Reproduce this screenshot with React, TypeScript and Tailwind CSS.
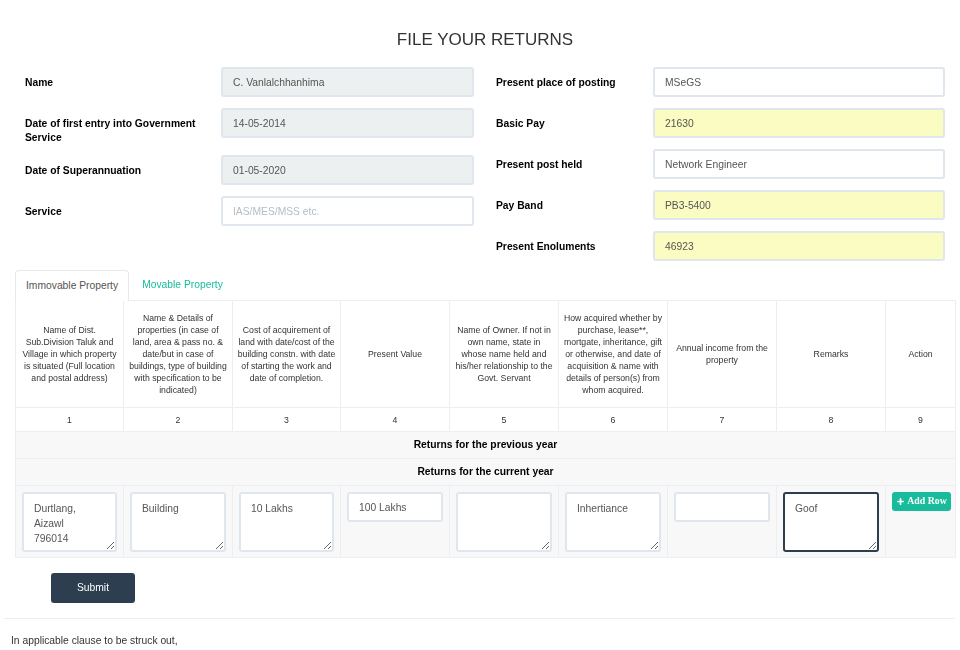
import { Plus } from "lucide-react"

const LEFT_FIELDS = [
  { label: "Name", value: "C. Vanlalchhanhima", readOnly: true },
  { label: "Date of first entry into Government Service", value: "14-05-2014", readOnly: true },
  { label: "Date of Superannuation", value: "01-05-2020", readOnly: true },
  { label: "Service", value: "", placeholder: "IAS/MES/MSS etc." },
]

const RIGHT_FIELDS = [
  { label: "Present place of posting", value: "MSeGS" },
  { label: "Basic Pay", value: "21630", yellow: true },
  { label: "Present post held", value: "Network Engineer" },
  { label: "Pay Band", value: "PB3-5400", yellow: true },
  { label: "Present Enoluments", value: "46923", yellow: true },
]

const HEADERS = [
  "Name of Dist. Sub.Division Taluk and Village in which property is situated (Full location and postal address)",
  "Name & Details of properties (in case of land, area & pass no. & date/but in case of buildings, type of building with specification to be indicated)",
  "Cost of acquirement of land with date/cost of the building constn. with date of starting the work and date of completion.",
  "Present Value",
  "Name of Owner. If not in own name, state in whose name held and his/her relationship to the Govt. Servant",
  "How acquired whether by purchase, lease**, mortgate, inheritance, gift or otherwise, and date of acquisition & name with details of person(s) from whom acquired.",
  "Annual income from the property",
  "Remarks",
  "Action",
]

const COL_WIDTHS = ["w-[108px]", "w-[109px]", "w-[108px]", "w-[109px]", "w-[109px]", "w-[109px]", "w-[109px]", "w-[109px]", "w-[70px]"]

function inputClass(readOnly?: boolean, yellow?: boolean) {
  const bg = readOnly ? "bg-[#ecf0f1]" : yellow ? "bg-[#fafcc2]" : "bg-white"
  return `h-[30px] w-full rounded-[3px] border-2 border-[#dfe6ed] px-[10px] text-[10.3px] text-[#555] outline-none placeholder:text-[#b4bdc5] ${bg}`
}

const AREA_BASE = "block h-[60px] w-full rounded-[3px] border-2 bg-white px-[10px] py-[7px] text-[10.3px] leading-[15px] text-[#555] outline-none"
const AREA = `${AREA_BASE} border-[#dfe6ed]`
const AREA_FOCUS = `${AREA_BASE} border-[#2c3e50]`

const CELL = "border border-[#eceff1] px-[6px] pt-[6px] pb-[5px] align-top"

export default function App() {
  return (
    <div className="h-[650px] w-[960px] overflow-hidden bg-white text-[#333]" style={{ fontFamily: '"Liberation Sans", Arial, sans-serif' }}>
      {/* Title */}
      <h1 className="pl-[10px] pt-[30px] text-center text-[17px] leading-[20px] text-[#333]">FILE YOUR RETURNS</h1>

      {/* Personal details */}
      <div className="mt-[17px] flex gap-[22px] pl-[25px]">
        <div className="w-[449px]">
          {LEFT_FIELDS.map((f) => (
            <div key={f.label} className="mb-[11px] grid grid-cols-[196px_253px] items-start">
              <label className="pt-[9px] pr-[8px] text-[10.3px] font-bold leading-[13.5px] text-black">{f.label}</label>
              <input
                readOnly={f.readOnly}
                defaultValue={f.value}
                placeholder={f.placeholder}
                className={inputClass(f.readOnly)}
              />
            </div>
          ))}
        </div>
        <div className="w-[449px]">
          {RIGHT_FIELDS.map((f) => (
            <div key={f.label} className="mb-[11px] grid grid-cols-[157px_292px] items-center">
              <label className="pt-[2px] text-[10.3px] font-bold leading-[14px] text-black">{f.label}</label>
              <input defaultValue={f.value} className={inputClass(false, f.yellow)} />
            </div>
          ))}
        </div>
      </div>

      {/* Tabs */}
      <div className="ml-[15px] mt-[-2px] flex">
        <div className="relative z-10 -mb-px rounded-t-[4px] border border-b-0 border-[#e6eaed] bg-white px-[10px] py-[8px] text-[10.3px] leading-[14px] text-[#555]">
          Immovable Property
        </div>
        <div className="ml-[2px] px-[11px] py-[8px] text-[10.3px] leading-[14px] text-[#18bc9c]">Movable Property</div>
      </div>

      {/* Property table */}
      <table className="ml-[15px] w-[940px] table-fixed border-collapse">
        <colgroup>
          {COL_WIDTHS.map((w, i) => (
            <col key={i} className={w} />
          ))}
        </colgroup>
        <thead>
          <tr className="h-[107px]">
            {HEADERS.map((h) => (
              <th key={h} className="border border-[#eceff1] px-[4px] py-[5px] text-center align-middle text-[8.7px] font-normal leading-[12px] text-[#333]">
                {h}
              </th>
            ))}
          </tr>
          <tr className="h-[24px]">
            {HEADERS.map((_, i) => (
              <th key={i} className="border border-[#eceff1] text-center text-[8.7px] font-normal leading-[12px] text-[#333]">
                {i + 1}
              </th>
            ))}
          </tr>
        </thead>
        <tbody className="bg-[#f8f8f8]">
          <tr className="h-[27px]">
            <td colSpan={9} className="border border-[#eceff1] text-center text-[10.3px] font-bold text-black">
              Returns for the previous year
            </td>
          </tr>
          <tr className="h-[27px]">
            <td colSpan={9} className="border border-[#eceff1] text-center text-[10.3px] font-bold text-black">
              Returns for the current year
            </td>
          </tr>
          <tr>
            <td className={CELL}>
              <textarea className={AREA} defaultValue={"Durtlang,\nAizawl\n796014"} />
            </td>
            <td className={CELL}>
              <textarea className={AREA} defaultValue="Building" />
            </td>
            <td className={CELL}>
              <textarea className={AREA} defaultValue="10 Lakhs" />
            </td>
            <td className={CELL}>
              <input className={inputClass()} defaultValue="100 Lakhs" />
            </td>
            <td className={CELL}>
              <textarea className={AREA} defaultValue="" />
            </td>
            <td className={CELL}>
              <textarea className={AREA} defaultValue="Inhertiance" />
            </td>
            <td className={CELL}>
              <input className={inputClass()} defaultValue="" />
            </td>
            <td className={CELL}>
              <textarea className={AREA_FOCUS} defaultValue="Goof" />
            </td>
            <td className={CELL}>
              <button
                className="flex h-[19px] w-[59px] items-center justify-center gap-[2px] whitespace-nowrap rounded-[3px] bg-[#18bc9c] text-[9.8px] font-bold text-white"
                style={{ fontFamily: '"Liberation Serif", "Times New Roman", serif' }}
              >
                <Plus size={9} strokeWidth={4.5} />
                Add Row
              </button>
            </td>
          </tr>
        </tbody>
      </table>

      {/* Submit */}
      <div className="ml-[51px] mt-[15px]">
        <button className="h-[30px] w-[84px] rounded-[3px] bg-[#2c3e50] text-[10.3px] text-white">Submit</button>
      </div>

      <div className="ml-[4px] mt-[15px] w-[951px] border-t border-[#eeeeee]" />

      <p className="ml-[11px] mt-[15px] text-[10.3px] leading-[14px] text-[#333]">In applicable clause to be struck out,</p>
    </div>
  )
}
